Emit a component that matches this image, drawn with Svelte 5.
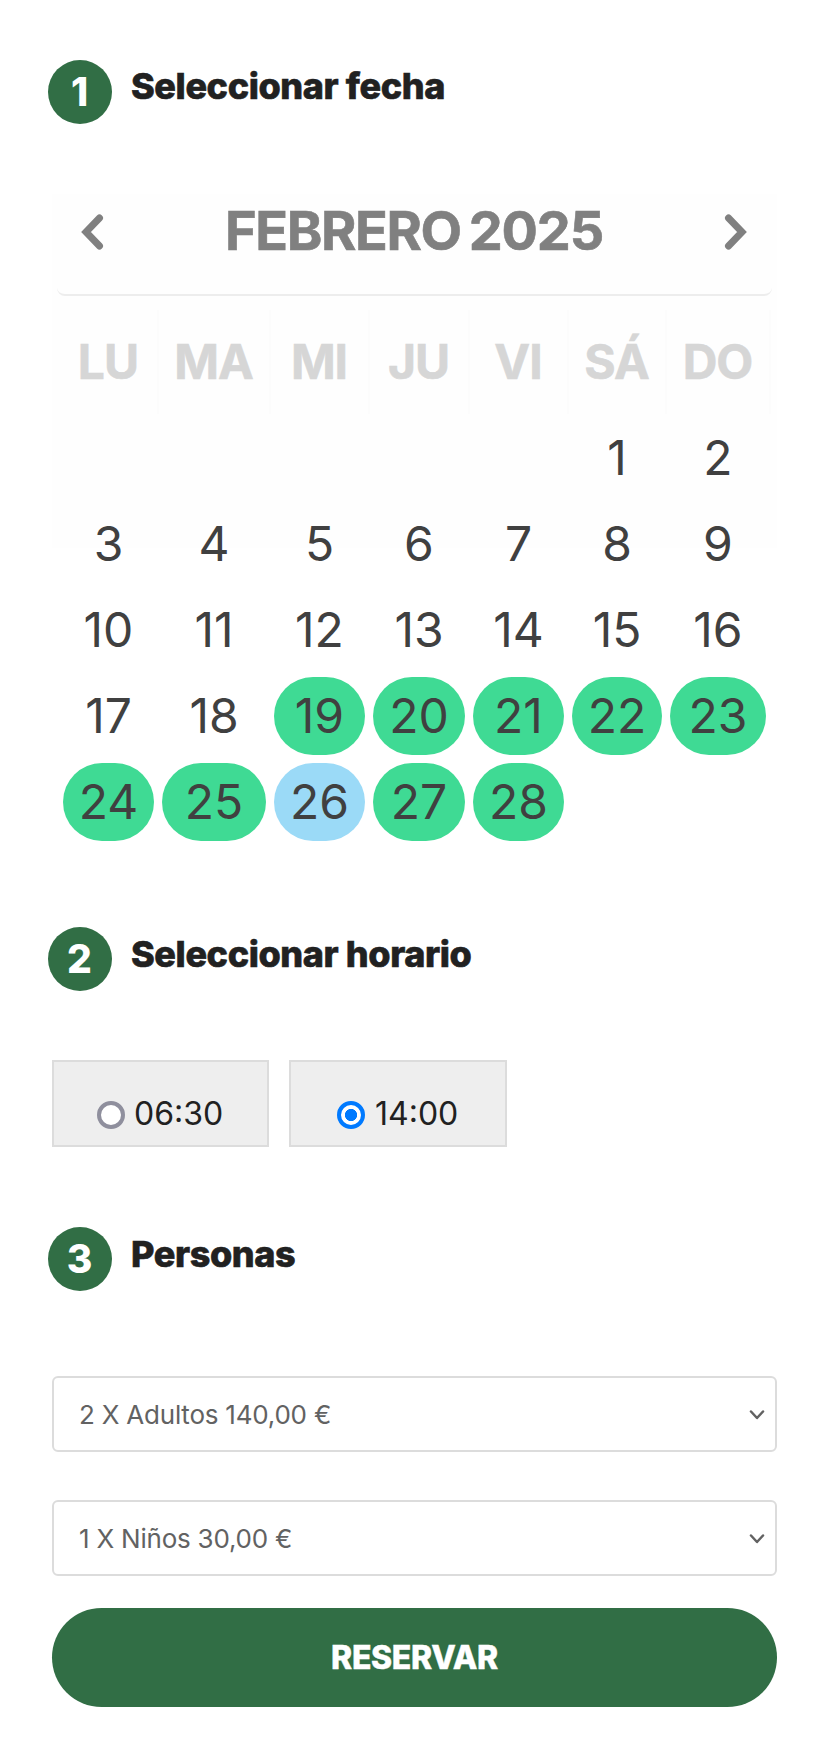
<script lang="ts">
	const weekdays = ['LU', 'MA', 'MI', 'JU', 'VI', 'SÁ', 'DO'];
	const leadingBlanks = 5;
	const days = Array.from({ length: 28 }, (_, i) => i + 1);
	const firstAvailable = 19;
	const times = ['06:30', '14:00'];
	const people = ['2 X Adultos 140,00 €', '1 X Niños 30,00 €'];

	let selectedDay = $state(26);
	let selectedTime = $state('14:00');
</script>

{#snippet heading(step: number, title: string)}
	<div class="heading">
		<span class="step">{step}</span>
		<h2>{title}</h2>
	</div>
{/snippet}

<main class="booking">
	<section class="date">
		{@render heading(1, 'Seleccionar fecha')}
		<div class="calendar">
			<div class="calendar-header">
				<button class="nav" aria-label="Anterior">
					<svg width="24" height="36" viewBox="0 0 24 36"><path d="M18.5 4 5 18l13.5 14" /></svg>
				</button>
				<div class="month"><span class="name">FEBRERO</span><span>2025</span></div>
				<button class="nav" aria-label="Siguiente">
					<svg width="24" height="36" viewBox="0 0 24 36"><path d="M4.5 4 18 18 4.5 32" /></svg>
				</button>
			</div>
			<div class="grid weekdays">
				{#each weekdays as weekday}
					<span>{weekday}</span>
				{/each}
			</div>
			<div class="grid days">
				{#each { length: leadingBlanks } as _}
					<span></span>
				{/each}
				{#each days as day}
					<button
						class="day"
						class:available={day >= firstAvailable}
						class:selected={day === selectedDay}
						disabled={day < firstAvailable}
						onclick={() => (selectedDay = day)}>{day}</button>
				{/each}
			</div>
		</div>
	</section>

	<section class="schedule">
		{@render heading(2, 'Seleccionar horario')}
		<div class="times">
			{#each times as time}
				<label class="time">
					<input type="radio" name="time" value={time} bind:group={selectedTime} />
					<span>{time}</span>
				</label>
			{/each}
		</div>
	</section>

	<section class="people">
		{@render heading(3, 'Personas')}
		<div class="selects">
			{#each people as label}
				<button class="select">
					<span>{label}</span>
					<svg width="16" height="12" viewBox="0 0 16 12"><path d="M2 3.5 8 10l6-6.5" /></svg>
				</button>
			{/each}
		</div>
	</section>

	<button class="submit">RESERVAR</button>
</main>

<style>
	:global(body) {
		background: #fff;
	}

	.booking {
		box-sizing: border-box;
		width: 828px;
		height: 1752px;
		padding: 60px 51px 45px 52px;
		font-family: Inter, 'Liberation Sans', sans-serif;
		color: #212121;
	}

	button {
		font-family: inherit;
		border: none;
		padding: 0;
		background: none;
	}

	.date {
		height: 867px;
	}

	.schedule {
		height: 300px;
	}

	.heading {
		display: flex;
		gap: 19px;
		height: 64px;
		margin-left: -4px;
	}

	.step {
		box-sizing: border-box;
		width: 64px;
		height: 64px;
		padding-right: 1px;
		border-radius: 50%;
		background: #316e45;
		color: #fff;
		font-size: 39px;
		font-weight: 800;
		line-height: 64px;
		text-align: center;
	}

	h2 {
		margin: 0;
		font-size: 36px;
		font-weight: 800;
		line-height: 55px;
		letter-spacing: -0.4px;
		white-space: nowrap;
		-webkit-text-stroke: 0.6px #212121;
	}

	.date h2 {
		line-height: 53px;
	}

	.calendar {
		margin-top: 70px;
		height: 354px;
		background: #fefefe;
	}

	.calendar-header {
		box-sizing: border-box;
		display: flex;
		justify-content: space-between;
		height: 102px;
		margin: 0 5px;
		padding: 20px 24px 0;
		border-bottom: 2px solid #ededed;
		border-radius: 8px;
	}

	.nav {
		height: 36px;
		line-height: 0;
	}

	.nav path {
		fill: none;
		stroke: #808080;
		stroke-width: 7;
		stroke-linecap: round;
	}

	.month {
		display: flex;
		gap: 8px;
		margin-left: -1px;
		color: #808080;
		font-size: 54px;
		font-weight: 700;
		line-height: 34px;
		letter-spacing: -1.2px;
		-webkit-text-stroke: 0.6px #808080;
	}

	.month .name {
		letter-spacing: -1.4px;
	}

	.grid {
		display: grid;
		grid-template-columns: 91px 104px 91px 92px 91px 90px 96px;
		column-gap: 8px;
		margin-left: 11px;
		font-size: 48px;
		text-align: center;
	}

	.weekdays {
		box-sizing: border-box;
		height: 123px;
		padding: 14px 0 7px;
		color: #d6d6d6;
		font-weight: 700;
		line-height: 104px;
		letter-spacing: -1px;
		-webkit-text-stroke: 0.6px #d6d6d6;
	}

	.weekdays span {
		padding-right: 1px;
		margin-right: -1px;
		text-indent: -1px;
		box-shadow: 2px 0 #fefefe, 4px 0 #fcfcfc;
	}

	.days {
		grid-auto-rows: 78px;
		row-gap: 8px;
	}

	.day {
		color: #404040;
		font-size: 48px;
		line-height: 78px;
		border-radius: 39px;
	}

	.day.available {
		background: #3fda94;
		cursor: pointer;
	}

	.day.selected {
		background: #9bdaf7;
	}

	.times {
		display: flex;
		gap: 20px;
		margin-top: 69px;
	}

	.time {
		box-sizing: border-box;
		display: flex;
		gap: 9px;
		width: 217px;
		height: 87px;
		padding: 32px 0 0 43px;
		border: 2px solid #dcdcdc;
		background: #eee;
		font-size: 32px;
		line-height: 40px;
	}

	.time + .time {
		gap: 10px;
		width: 218px;
		padding-left: 46px;
	}

	.time input {
		appearance: none;
		box-sizing: border-box;
		width: 28px;
		height: 28px;
		margin: 7px 0 0;
		border: 4px solid #8f8f9d;
		border-radius: 50%;
		background: #fff;
	}

	.time input:checked {
		border-color: #007aff;
		background: radial-gradient(circle, #007aff 5.8px, #fff 6.4px);
	}

	.selects {
		display: grid;
		gap: 48px;
		margin-top: 85px;
	}

	.select {
		box-sizing: border-box;
		display: flex;
		justify-content: space-between;
		align-items: center;
		height: 76px;
		padding: 0 10px 0 25px;
		border: 2px solid #dcdcdc;
		border-radius: 6px;
		color: #626262;
		font-size: 26px;
		letter-spacing: -0.22px;
	}

	.select path {
		fill: none;
		stroke: #626262;
		stroke-width: 2.5;
		stroke-linecap: round;
		stroke-linejoin: round;
	}

	.submit {
		width: 100%;
		height: 99px;
		margin-top: 32px;
		border-radius: 50px;
		background: #316e45;
		color: #fff;
		font-size: 32px;
		font-weight: 800;
		letter-spacing: -0.35px;
		-webkit-text-stroke: 0.4px #fff;
	}
</style>
